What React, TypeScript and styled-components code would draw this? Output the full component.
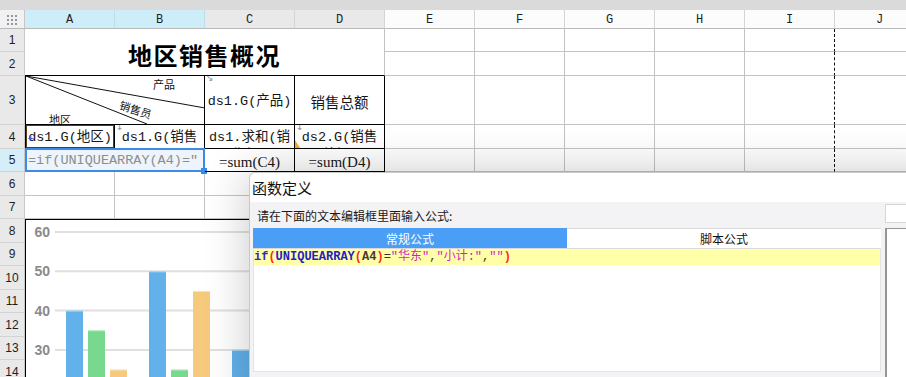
import React, { FC } from 'react';
import styled, { createGlobalStyle, css } from 'styled-components';

const GRID_LINE = '#c3c3c3';
const CELL_FONT = `'Liberation Mono', 'Noto Sans CJK SC', monospace`;
const UI_FONT = `'Noto Sans CJK SC', 'Noto Sans', sans-serif`;

const GlobalStyle = createGlobalStyle`
    *, *::before, *::after {
        box-sizing: border-box;
    }
    html, body {
        margin: 0;
        padding: 0;
        background: #ffffff;
    }
    body {
        width: 906px;
        height: 377px;
        overflow: hidden;
        font-family: ${UI_FONT};
    }
`;

interface GridPos {
    $col: number;
    $row: number;
    $colSpan?: number;
    $rowSpan?: number;
}

const placed = css<GridPos>`
    grid-column: ${(p) => p.$col} / span ${(p) => p.$colSpan ?? 1};
    grid-row: ${(p) => p.$row} / span ${(p) => p.$rowSpan ?? 1};
`;

const Page = styled.div`
    position: relative;
    width: 906px;
    height: 377px;
    overflow: hidden;
    background: #fff;
`;

const TopStrip = styled.div`
    height: 10px;
    background: #dadadb;
`;

const Sheet = styled.div`
    display: grid;
    grid-template-columns: 25px repeat(10, 90px);
    grid-template-rows: 19px 23px 24px 49px 24px 23px 24px 23px 24px 23px 24px 23px 24px 23px 24px;
`;

const Corner = styled.div<GridPos>`
    ${placed}
    background: #f1f1f1;
    border-right: 1px solid #c8c8c8;
    border-bottom: 1px solid #b9b9b9;
    display: grid;
    place-items: center;
`;

const DotGrid = styled.div`
    display: grid;
    grid-template-columns: repeat(3, 2px);
    gap: 2px;
    margin-top: 1px;

    span {
        width: 2px;
        height: 2px;
        background: #8f98a2;
    }
`;

type HeaderTone = 'selected' | 'used' | 'free';

const headerBg: Record<HeaderTone, string> = {
    selected: '#cdeef9',
    used: '#e9e9e9',
    free: '#fcfcfc',
};

const ColHeader = styled.div<GridPos & { $tone: HeaderTone }>`
    ${placed}
    background: ${(p) => headerBg[p.$tone]};
    border-right: 1px solid ${(p) => (p.$tone === 'selected' ? '#bcdde9' : '#d5d5d5')};
    border-bottom: 1px solid #b9b9b9;
    display: flex;
    align-items: center;
    justify-content: center;
    padding-top: 1px;
    font: 12px 'Liberation Mono', monospace;
    color: #1e1e1e;
`;

const RowHeader = styled.div<GridPos & { $selected?: boolean }>`
    ${placed}
    background: ${(p) => (p.$selected ? '#d5eef8' : '#e9e9e9')};
    border-right: 1px solid #c8c8c8;
    border-bottom: 1px solid #d3d3d3;
    display: flex;
    align-items: center;
    justify-content: center;
    font: 12px 'Liberation Sans', sans-serif;
    color: #1e1e1e;
`;

const GridCell = styled.div<GridPos & { $pageBreak?: boolean }>`
    ${placed}
    border-right: 1px ${(p) => (p.$pageBreak ? 'dashed #111' : `solid ${GRID_LINE}`)};
    border-bottom: 1px solid ${GRID_LINE};
`;

const TitleCell = styled.div<GridPos>`
    ${placed}
    display: flex;
    align-items: center;
    justify-content: center;
    padding-top: 4px;
    border-right: 1px solid ${GRID_LINE};
    border-bottom: 1px solid #000;
    font: bold 24px ${UI_FONT};
    letter-spacing: 1.5px;
    color: #000;
`;

const SlashHeader = styled.div<GridPos>`
    ${placed}
    position: relative;
    border-left: 1px solid #000;
    border-right: 1px solid #000;
    border-bottom: 1px solid #000;
    font: 11px ${UI_FONT};
    color: #111;

    svg {
        position: absolute;
        left: 0;
        top: 0;
    }
`;

const SlashLabel = styled.span<{ $x: number; $y: number; $rotate?: number }>`
    position: absolute;
    left: ${(p) => p.$x}px;
    top: ${(p) => p.$y}px;
    line-height: 1;
    transform: rotate(${(p) => p.$rotate ?? 0}deg);
    transform-origin: left center;
`;

const ReportCell = styled.div<GridPos & { $leading?: boolean; $framed?: boolean; $wrap?: boolean; $serif?: boolean; $wide?: boolean }>`
    ${placed}
    position: relative;
    overflow: hidden;
    display: flex;
    justify-content: center;
    align-items: ${(p) => (p.$wrap ? 'flex-start' : 'center')};
    padding: 4px 1px 0;
    border-right: 1px solid #000;
    border-bottom: 1px solid #000;
    ${(p) =>
        p.$leading &&
        css`
            border-left: 1px solid #000;
        `}
    ${(p) =>
        p.$framed &&
        css`
            box-shadow: inset 0 0 0 1px #5b3a17;
        `}
    font: ${(p) =>
        p.$serif ? `15px 'Liberation Serif', serif` : p.$wide ? `14.5px ${UI_FONT}` : `13.5px ${CELL_FONT}`};
    line-height: 18px;
    text-align: center;
    word-break: break-all;
    line-break: anywhere;
    color: #161616;
`;

const CornerMark = styled.span<{ $tone?: 'gray' | 'blue'; $top?: number }>`
    position: absolute;
    left: 1px;
    top: ${(p) => p.$top ?? -2}px;
    font: 9px 'DejaVu Sans', sans-serif;
    line-height: 1;
    color: ${(p) => (p.$tone === 'blue' ? '#2b5bd8' : '#8a8a8a')};
`;

const CommentFlag = styled.span`
    position: absolute;
    left: 0;
    bottom: 0;
    width: 0;
    height: 0;
    border-bottom: 8px solid #f2b01e;
    border-right: 5px solid transparent;
`;

const SelectedRange = styled.div<GridPos>`
    ${placed}
    position: relative;
    margin-top: -1px;
    border: 2px solid #3b8be6;
    background: #eef4fb;
`;

const SelectedText = styled.div`
    height: 100%;
    overflow: hidden;
    padding: 2px 1px 0 1px;
    font: 13.5px ${CELL_FONT};
    line-height: 18px;
    word-break: break-all;
    line-break: anywhere;
    color: #8d8d8d;
`;

const FillHandle = styled.span`
    position: absolute;
    right: -4px;
    bottom: -4px;
    width: 6px;
    height: 6px;
    background: #3b8be6;
`;

const ChartFrame = styled.div<GridPos>`
    ${placed}
    border-top: 1px solid #000;
    border-left: 1px solid #000;
    background: #fff;
    overflow: hidden;
`;

const Dialog = styled.div`
    position: absolute;
    left: 249px;
    top: 172px;
    width: 700px;
    height: 240px;
    display: flex;
    flex-direction: column;
    background: #f3f3f5;
    border: 1px solid #c9c9c9;
    border-radius: 6px 6px 0 0;
    box-shadow: 0 0 45px rgba(0, 0, 0, 0.22);
    z-index: 5;
`;

const TitleBar = styled.div`
    height: 29px;
    flex: none;
    padding-left: 2px;
    background: #fff;
    border-radius: 6px 6px 0 0;
    font: 15px ${UI_FONT};
    line-height: 29px;
    color: #111;
`;

const DialogBody = styled.div`
    flex: 1;
    display: flex;
    gap: 4px;
    padding-left: 3px;
`;

const EditorColumn = styled.div`
    width: 628px;
    display: flex;
    flex-direction: column;
`;

const Prompt = styled.div`
    height: 26px;
    padding-left: 4px;
    font: 12px ${UI_FONT};
    line-height: 27px;
    color: #1a1a1a;
`;

const TabBar = styled.div`
    display: grid;
    grid-template-columns: 314px 314px;
    height: 21px;
    border-bottom: 1px solid #d9d9d9;
`;

const Tab = styled.div<{ $active?: boolean }>`
    display: flex;
    align-items: center;
    justify-content: center;
    font: 12px ${UI_FONT};
    ${(p) =>
        p.$active
            ? css`
                  background: #4a9ef5;
                  color: #fff;
              `
            : css`
                  background: #fff;
                  color: #111;
                  border-top: 1px solid #d9d9d9;
              `}
`;

const Editor = styled.div`
    height: 123px;
    background: #fff;
    border: 1px solid #e4e4e4;
    border-top: none;
`;

const CodeLine = styled.div`
    height: 16px;
    background: #ffffa8;
    font: 12px ${CELL_FONT};
    line-height: 16px;
    white-space: pre;
`;

type TokenKind = 'kw' | 'fn' | 'paren' | 'ref' | 'op' | 'str';

const tokenColor: Record<TokenKind, string> = {
    kw: '#3326d0',
    fn: '#1f22c4',
    paren: '#ff2a1a',
    ref: '#4a3a2e',
    op: '#333333',
    str: '#d21fc4',
};

const Token = styled.span<{ $kind: TokenKind }>`
    color: ${(p) => tokenColor[p.$kind]};
    font-weight: ${(p) => (p.$kind === 'str' || p.$kind === 'op' ? 'normal' : 'bold')};
`;

const SideColumn = styled.div`
    flex: 1;
    display: flex;
    flex-direction: column;
    gap: 5px;
    padding-top: 2px;
`;

const SearchBox = styled.div`
    height: 19px;
    background: #fff;
    border: 1px solid #d6d6d6;
    border-right: none;
`;

const SidePanel = styled.div`
    flex: 1;
    background: #fff;
    border-left: 2px solid #969696;
    border-top: 1px solid #969696;
`;

const COLS = ['A', 'B', 'C', 'D', 'E', 'F', 'G', 'H', 'I', 'J'];
const ROW_COUNT = 14;

const CODE: [string, TokenKind][] = [
    ['if', 'kw'],
    ['(', 'paren'],
    ['UNIQUEARRAY', 'fn'],
    ['(', 'paren'],
    ['A4', 'ref'],
    [')', 'paren'],
    ['=', 'op'],
    ['"华东"', 'str'],
    [',', 'op'],
    ['"小计:"', 'str'],
    [',', 'op'],
    ['""', 'str'],
    [')', 'paren'],
];

const BLUE = '#63b1ea';
const GREEN = '#78d98e';
const ORANGE = '#f6ca7d';

const BARS = [
    { x: 40, v: 40, fill: BLUE },
    { x: 62, v: 35, fill: GREEN },
    { x: 84, v: 25, fill: ORANGE },
    { x: 123, v: 50, fill: BLUE },
    { x: 145, v: 25, fill: GREEN },
    { x: 167, v: 45, fill: ORANGE },
    { x: 206, v: 30, fill: BLUE },
    { x: 228, v: 20, fill: GREEN },
    { x: 250, v: 35, fill: ORANGE },
];

const valueY = (v: number): number => 12 + (60 - v) * 3.93;

const BarChart: FC = () => (
    <svg width="359" height="170">
        {[60, 50, 40, 30, 20].map((t) => (
            <g key={t}>
                <line x1={29} x2={359} y1={valueY(t)} y2={valueY(t)} stroke="#e0e0e0" strokeWidth={2} />
                <text
                    x={24}
                    y={valueY(t) + 5}
                    textAnchor="end"
                    fontFamily="Liberation Sans, sans-serif"
                    fontSize={14}
                    fontWeight="bold"
                    fill="#8a8a8a"
                >
                    {t}
                </text>
            </g>
        ))}
        {BARS.map((b) => (
            <g key={b.x}>
                <rect x={b.x} y={valueY(b.v)} width={17} height={170 - valueY(b.v)} fill={b.fill} />
                <rect x={b.x} y={valueY(b.v)} width={17} height={1} fill="#ffffff" opacity={0.45} />
            </g>
        ))}
    </svg>
);

const App: FC = () => {
    const plainCells = [];
    for (let r = 1; r <= ROW_COUNT; r++) {
        for (let c = 0; c < COLS.length; c++) {
            if (c <= 3 && (r <= 5 || r >= 8)) continue;
            plainCells.push(<GridCell key={`${r}-${c}`} $col={c + 2} $row={r + 1} $pageBreak={c === 8} />);
        }
    }

    return (
        <Page>
            <GlobalStyle />
            <TopStrip />
            <Sheet>
                <Corner $col={1} $row={1}>
                    <DotGrid>
                        {Array.from({ length: 9 }).map((_, i) => (
                            <span key={i} />
                        ))}
                    </DotGrid>
                </Corner>
                {COLS.map((name, i) => (
                    <ColHeader key={name} $col={i + 2} $row={1} $tone={i < 2 ? 'selected' : i < 4 ? 'used' : 'free'}>
                        {name}
                    </ColHeader>
                ))}
                {Array.from({ length: ROW_COUNT }).map((_, i) => (
                    <RowHeader key={i} $col={1} $row={i + 2} $selected={i === 4}>
                        {i + 1}
                    </RowHeader>
                ))}

                <TitleCell $col={2} $row={2} $colSpan={4} $rowSpan={2}>
                    地区销售概况
                </TitleCell>

                <SlashHeader $col={2} $row={4} $colSpan={2}>
                    <svg width="179" height="48">
                        <line x1={0} y1={0} x2={179} y2={32} stroke="#111" strokeWidth={1} />
                        <line x1={0} y1={0} x2={121} y2={48} stroke="#111" strokeWidth={1} />
                    </svg>
                    <SlashLabel $x={127} $y={3}>产品</SlashLabel>
                    <SlashLabel $x={94} $y={23} $rotate={18}>
                        销售员
                    </SlashLabel>
                    <SlashLabel $x={23} $y={38}>地区</SlashLabel>
                </SlashHeader>
                <ReportCell $col={4} $row={4}>
                    <CornerMark>↘</CornerMark>
                    ds1.G(产品)
                </ReportCell>
                <ReportCell $col={5} $row={4} $wide>
                    销售总额
                </ReportCell>

                <ReportCell $col={2} $row={5} $leading $framed $wrap>
                    <CornerMark $tone="blue" $top={9}>
                        +
                    </CornerMark>
                    ds1.G(地区)
                </ReportCell>
                <ReportCell $col={3} $row={5} $wrap>
                    <CornerMark>↓</CornerMark>
                    ds1.G(销售员)
                </ReportCell>
                <ReportCell $col={4} $row={5} $wrap>
                    ds1.求和(销售额)
                </ReportCell>
                <ReportCell $col={5} $row={5} $wrap>
                    <CornerMark>↓</CornerMark>
                    ds2.G(销售总额)
                    <CommentFlag />
                </ReportCell>

                <SelectedRange $col={2} $row={6} $colSpan={2}>
                    <SelectedText>=if(UNIQUEARRAY(A4)="华东","小计:","")</SelectedText>
                    <FillHandle />
                </SelectedRange>
                <ReportCell $col={4} $row={6} $serif>
                    =sum(C4)
                </ReportCell>
                <ReportCell $col={5} $row={6} $serif>
                    =sum(D4)
                </ReportCell>

                {plainCells}

                <ChartFrame $col={2} $row={9} $colSpan={4} $rowSpan={7}>
                    <BarChart />
                </ChartFrame>
            </Sheet>

            <Dialog>
                <TitleBar>函数定义</TitleBar>
                <DialogBody>
                    <EditorColumn>
                        <Prompt>请在下面的文本编辑框里面输入公式:</Prompt>
                        <TabBar>
                            <Tab $active>常规公式</Tab>
                            <Tab>脚本公式</Tab>
                        </TabBar>
                        <Editor>
                            <CodeLine>
                                {CODE.map(([text, kind], i) => (
                                    <Token key={i} $kind={kind}>
                                        {text}
                                    </Token>
                                ))}
                            </CodeLine>
                        </Editor>
                    </EditorColumn>
                    <SideColumn>
                        <SearchBox />
                        <SidePanel />
                    </SideColumn>
                </DialogBody>
            </Dialog>
        </Page>
    );
};

export default App;
